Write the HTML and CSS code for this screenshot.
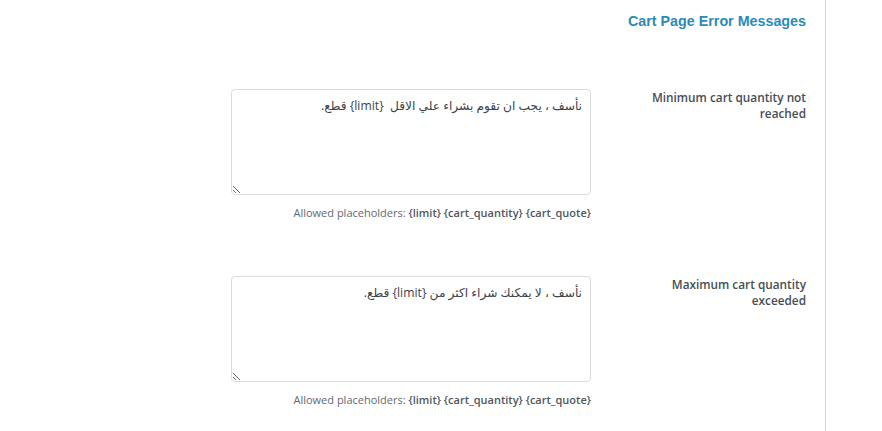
FILE: index.html
```html
<!DOCTYPE html>
<html lang="ar">
<head>
<meta charset="utf-8">
<title>Cart Page Error Messages</title>
<link rel="stylesheet" href="styles.css">
</head>
<body>
<div class="page">
  <div class="content">
    <h2 class="section-title">Cart Page Error Messages</h2>
    <div class="form">
      <div class="row">
        <label class="label" for="min-msg">Minimum cart quantity not reached</label>
        <div class="field">
          <textarea id="min-msg" class="msg" dir="rtl">نأسف ، يجب ان تقوم بشراء علي الاقل  {limit} قطع.</textarea>
          <p class="desc" dir="ltr">Allowed placeholders: <b>{limit}</b> <b>{cart_quantity}</b> <b>{cart_quote}</b></p>
        </div>
      </div>
      <div class="row">
        <label class="label" for="max-msg">Maximum cart quantity exceeded</label>
        <div class="field">
          <textarea id="max-msg" class="msg" dir="rtl">نأسف ، لا يمكنك شراء اكثر من {limit} قطع.</textarea>
          <p class="desc" dir="ltr">Allowed placeholders: <b>{limit}</b> <b>{cart_quantity}</b> <b>{cart_quote}</b></p>
        </div>
      </div>
    </div>
  </div>
</div>
</body>
</html>
```
FILE: styles.css
```css
html, body {
  margin: 0;
  padding: 0;
  background: #fff;
}
body {
  font-family: "Open Sans", "DejaVu Sans", sans-serif;
  color: #3c434a;
}
.page {
  box-sizing: border-box;
  width: 826px;
  height: 431px;
  border-right: 1px solid #d6d6d6;
  overflow: hidden;
}
.content {
  direction: rtl;
  padding: 12px 19px 0 0;
}
.section-title {
  margin: 0;
  font-family: "Liberation Sans", Arial, sans-serif;
  font-weight: bold;
  font-size: 14.3px;
  line-height: 18px;
  color: #2b8bb8;
}
.form {
  display: flex;
  flex-direction: column;
  gap: 54px;
  margin-top: 59px;
}
.row {
  display: grid;
  grid-template-columns: 176px 360px;
  column-gap: 39px;
  align-items: start;
}
.label {
  padding-top: 0;
  font-size: 11.8px;
  font-weight: 600;
  line-height: 16px;
  color: #474e55;
  text-align: right;
}
.field {
  display: flex;
  flex-direction: column;
  align-items: flex-start;
}
.msg {
  box-sizing: border-box;
  width: 360px;
  height: 106px;
  margin: 0;
  padding: 6px 8px;
  border: 1px solid #dcdcde;
  border-radius: 4px;
  background: #fff;
  font-family: "Open Sans", "DejaVu Sans", sans-serif;
  font-size: 12.2px;
  line-height: 20px;
  color: #3c434a;
  resize: vertical;
}
.desc {
  margin: 9px 0 0;
  font-size: 11px;
  line-height: 18px;
  color: #646970;
  text-align: right;
}
.desc b {
  font-weight: 600;
  color: #50575e;
}
```
